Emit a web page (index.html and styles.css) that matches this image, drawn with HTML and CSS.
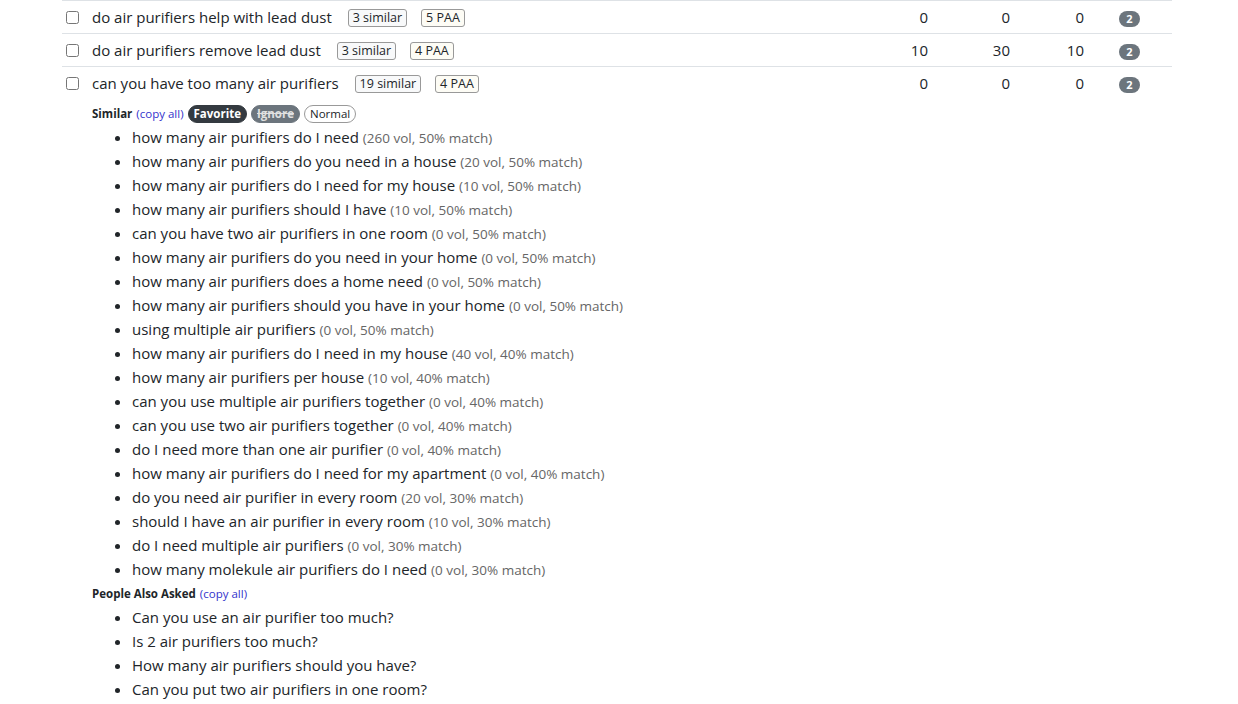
FILE: index.html
```html
<!DOCTYPE html>
<html lang="en">
<head>
    <meta charset="UTF-8">
    <title>Keyword Questions</title>
    <link rel="stylesheet" href="styles.css">
</head>
<body>
    <div class="container">
        <table class="kw-table">
            <tr class="kw-row">
                <td class="col-check"><input type="checkbox"></td>
                <td class="col-text">do air purifiers help with lead dust <span class="tag">3 similar</span> <span class="tag tag-paa">5 PAA</span></td>
                <td class="col-num n1">0</td>
                <td class="col-num n2">0</td>
                <td class="col-num n3">0</td>
                <td class="col-badge"><span class="count">2</span></td>
            </tr>
            <tr class="kw-row">
                <td class="col-check"><input type="checkbox"></td>
                <td class="col-text">do air purifiers remove lead dust <span class="tag">3 similar</span> <span class="tag tag-paa">4 PAA</span></td>
                <td class="col-num n1">10</td>
                <td class="col-num n2">30</td>
                <td class="col-num n3">10</td>
                <td class="col-badge"><span class="count">2</span></td>
            </tr>
            <tr class="kw-row open">
                <td class="col-check"><input type="checkbox"></td>
                <td class="col-text">can you have too many air purifiers <span class="tag">19 similar</span> <span class="tag tag-paa">4 PAA</span></td>
                <td class="col-num n1">0</td>
                <td class="col-num n2">0</td>
                <td class="col-num n3">0</td>
                <td class="col-badge"><span class="count">2</span></td>
            </tr>
            <tr class="detail-row">
                <td></td>
                <td colspan="5" class="detail">
                    <div class="section-head">
                        <b>Similar</b> <a class="copy">(copy all)</a>
                        <span class="pill pill-fav">Favorite</span>
                        <span class="pill pill-ignore">Ignore</span>
                        <span class="pill pill-normal">Normal</span>
                    </div>
                    <ul class="kw-list">
                        <li>how many air purifiers do I need <small>(260 vol, 50% match)</small></li>
                        <li>how many air purifiers do you need in a house <small>(20 vol, 50% match)</small></li>
                        <li>how many air purifiers do I need for my house <small>(10 vol, 50% match)</small></li>
                        <li>how many air purifiers should I have <small>(10 vol, 50% match)</small></li>
                        <li>can you have two air purifiers in one room <small>(0 vol, 50% match)</small></li>
                        <li>how many air purifiers do you need in your home <small>(0 vol, 50% match)</small></li>
                        <li>how many air purifiers does a home need <small>(0 vol, 50% match)</small></li>
                        <li>how many air purifiers should you have in your home <small>(0 vol, 50% match)</small></li>
                        <li>using multiple air purifiers <small>(0 vol, 50% match)</small></li>
                        <li>how many air purifiers do I need in my house <small>(40 vol, 40% match)</small></li>
                        <li>how many air purifiers per house <small>(10 vol, 40% match)</small></li>
                        <li>can you use multiple air purifiers together <small>(0 vol, 40% match)</small></li>
                        <li>can you use two air purifiers together <small>(0 vol, 40% match)</small></li>
                        <li>do I need more than one air purifier <small>(0 vol, 40% match)</small></li>
                        <li>how many air purifiers do I need for my apartment <small>(0 vol, 40% match)</small></li>
                        <li>do you need air purifier in every room <small>(20 vol, 30% match)</small></li>
                        <li>should I have an air purifier in every room <small>(10 vol, 30% match)</small></li>
                        <li>do I need multiple air purifiers <small>(0 vol, 30% match)</small></li>
                        <li>how many molekule air purifiers do I need <small>(0 vol, 30% match)</small></li>
                    </ul>
                    <div class="section-head">
                        <b>People Also Asked</b> <a class="copy">(copy all)</a>
                    </div>
                    <ul class="kw-list">
                        <li>Can you use an air purifier too much?</li>
                        <li>Is 2 air purifiers too much?</li>
                        <li>How many air purifiers should you have?</li>
                        <li>Can you put two air purifiers in one room?</li>
                    </ul>
                </td>
            </tr>
        </table>
    </div>
</body>
</html>
```

FILE: styles.css
```css
body {
    margin: 0;
    font-family: 'Open Sans', 'Noto Sans', sans-serif;
    color: #212529;
    background: #fff;
    font-size: 15px;
}

.container {
    width: 1110px;
    margin-left: 62px;
}

.kw-table {
    width: 100%;
    border-collapse: collapse;
    border-top: 1px solid #dee2e6;
}

.kw-row td {
    height: 32px;
    padding: 0;
    vertical-align: middle;
    border-bottom: 1px solid #dee2e6;
}

.kw-row.open td {
    border-bottom: none;
}

.col-check {
    width: 30px;
}

.col-check input {
    margin: 0 0 2px 4px;
    width: 13px;
    height: 13px;
    vertical-align: middle;
}

.col-text {
    white-space: nowrap;
}

.tag {
    display: inline-block;
    font-size: 12.5px;
    line-height: 16px;
    padding: 0 4px;
    border: 1px solid #999;
    border-radius: 3px;
    background: #f8f9fa;
    margin-left: 12px;
    vertical-align: 1px;
}

.tag-paa {
    margin-left: 10px;
    background: #fdfcf5;
}

.col-num {
    text-align: right;
}

.n1 { width: 60px; }
.n2 { width: 82px; }
.n3 { width: 74px; }

.kw-row .col-badge {
    width: 53px;
    padding-left: 35px;
}

.count {
    display: inline-block;
    background: #6c757d;
    color: #fff;
    font-size: 11px;
    font-weight: 700;
    line-height: 16px;
    width: 21px;
    text-align: center;
    border-radius: 8px;
}

.detail-row td {
    padding: 0;
    vertical-align: top;
}

.section-head {
    font-size: 11.5px;
    line-height: 20px;
    margin-top: 5px;
}

.kw-list + .section-head {
    margin-top: 3px;
}

.section-head b {
    font-weight: 700;
}

.copy {
    color: #3333cc;
    margin-left: 1px;
}

.pill {
    display: inline-block;
    border-radius: 9px;
    padding: 0 5px;
    line-height: 16px;
    font-size: 11.5px;
    border: 1px solid #999;
    margin-left: 1px;
}

.pill-fav {
    background: #343a40;
    border-color: #343a40;
    color: #fff;
    font-weight: 700;
}

.pill-ignore {
    background: #6c757d;
    border-color: #6c757d;
    color: #e0e0e0;
    font-weight: 700;
    text-decoration: line-through;
}

.pill-normal {
    background: #fff;
}

.kw-list {
    margin: 1px 0 0 0;
    padding-left: 40px;
}

.kw-list li {
    line-height: 24px;
    font-size: 15px;
}

.kw-list small {
    font-size: 13.5px;
    line-height: 1;
    color: #666;
}
```
